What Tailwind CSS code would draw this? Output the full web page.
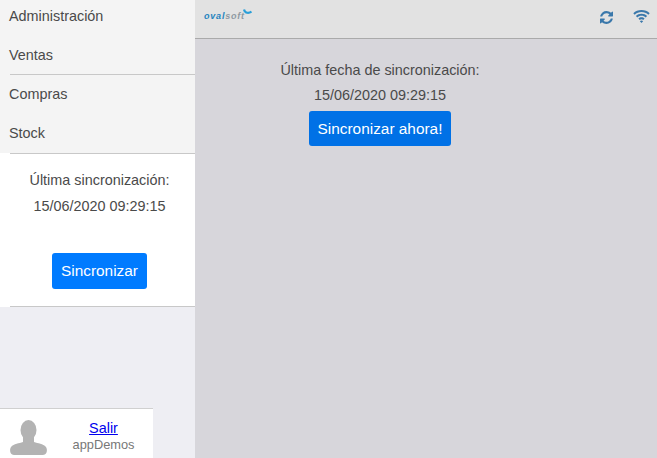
<!DOCTYPE html>
<html lang="en">
<head>
  <meta charset="UTF-8">
  <title>Sincronización</title>
  <script src="https://cdn.jsdelivr.net/npm/@tailwindcss/browser@4"></script>
</head>
<body class="h-[458px] overflow-hidden font-['Liberation_Sans',Arial,sans-serif] text-[14.4px] text-[#4a4a4a]">
  <div class="flex h-full">
    <!-- Sidebar -->
    <aside class="w-[195px] shrink-0 flex flex-col bg-[#eeeef3]">
      <div class="bg-[#f4f4f4]">
        <div class="h-[35px] pl-[9px] leading-[32px]">Administración</div>
        <div class="h-[39px] pl-[9px] leading-[40px]">Ventas</div>
        <div class="h-[40px] pl-[9px] leading-[40px] relative">Compras<span class="absolute left-[10px] right-0 top-0 h-px bg-[#c8c8c8]"></span></div>
        <div class="h-[39px] pl-[9px] leading-[39px]">Stock</div>
      </div>
      <div class="bg-white h-[154px] pl-[10px]">
        <div class="h-full border-y border-[#c8c8c8] flex flex-col items-center pr-[6px]">
          <p class="mt-[16px] leading-[20px]">Última sincronización:</p>
          <p class="mt-[6px] leading-[20px]">15/06/2020 09:29:15</p>
          <button class="mt-[37px] w-[95px] h-[36px] rounded-[3px] bg-[#007bff] text-white text-[15.400px]">Sincronizar</button>
        </div>
      </div>
      <!-- User -->
      <div class="mt-auto w-[153px] h-[50px] bg-white border-t border-[#d0d0d0] flex">
        <svg class="w-[37px] h-[35px] ml-[10px] mt-[11px] shrink-0" viewBox="0 0 37 35" fill="#b3b3b3">
          <ellipse cx="18.500" cy="10" rx="8" ry="10"/>
          <path d="M13 17h11v5c4 1.500 9 1.500 12 5 1.500 2 1.500 8-3 8H4c-4.500 0-4.500-6-3-8 3-3.500 8-3.500 12-5z"/>
        </svg>
        <div class="flex-1 flex flex-col items-center pl-[7px]">
          <a href="#" class="mt-[10px] leading-[18px] text-[#0000ee] underline">Salir</a>
          <span class="leading-[16px] text-[#777] text-[12.800px]">appDemos</span>
        </div>
      </div>
    </aside>

    <!-- Main -->
    <div class="flex-1 flex flex-col bg-[#d7d6db]">
      <header class="h-[39px] shrink-0 bg-[#e2e2e2] border-b border-[#aaa] flex items-center relative">
        <div class="ml-[9px] mb-[6px] flex items-start">
          <span class="text-[9px] leading-[9px] font-bold italic tracking-[0.8px] text-[#2584bf]">oval<span class="text-[#8f9aa3]">soft</span></span>
          <svg class="w-[9px] h-[7px] -mt-[4px] -ml-[2px]" viewBox="0 0 9 7" fill="none" stroke="#2a9fd8" stroke-width="2.200"><path d="M1 1.500c1 4 5 4 7.500 2"/></svg>
        </div>
        <svg class="absolute left-[405px] top-[11px] w-[13px] h-[13px]" viewBox="0 0 1536 1536" fill="#3a78ab">
          <path d="M1511 928q0 5-1 7-64 268-268 434.500T764 1536q-146 0-282.500-55T238 1324l-129 129q-19 19-45 19t-45-19-19-45V960q0-26 19-45t45-19h448q26 0 45 19t19 45-19 45l-137 137q71 66 161 102t187 36q134 0 250-65t186-179q11-17 53-117 8-23 30-23h192q13 0 22.500 9.500t9.500 22.500zm25-800v448q0 26-19 45t-45 19h-448q-26 0-45-19t-19-45 19-45l138-138Q969 256 768 256q-134 0-250 65T332 500q-11 17-53 117-8 23-30 23H50q-13 0-22.500-9.500T18 608v-7q65-268 270-434.500T768 0q146 0 284 55.500T1297 212l130-129q19-19 45-19t45 19 19 45z"/>
        </svg>
        <svg class="absolute left-[438px] top-[10px] w-[17px] h-[13px]" viewBox="0 0 17 13" fill="#3a78ab">
          <path d="M8.500 0C5.300 0 2.400 1.200 0.300 3.200L1.700 4.700C3.500 3 5.900 2 8.500 2s5 1 6.800 2.700l1.400-1.500C14.600 1.200 11.700 0 8.500 0z"/>
          <path d="M8.500 3.700C6.300 3.700 4.300 4.500 2.900 5.900L4.300 7.400C5.400 6.300 6.900 5.700 8.500 5.700s3.100 0.600 4.200 1.700l1.400-1.500C12.700 4.500 10.700 3.700 8.500 3.700z"/>
          <path d="M8.500 7.300C7.300 7.300 6.200 7.800 5.400 8.500L6.800 10C7.200 9.600 7.800 9.300 8.500 9.300s1.300 0.300 1.700 0.700L11.600 8.500C10.800 7.800 9.700 7.300 8.500 7.300z"/>
          <path d="M8.500 13L6.900 11.200C7.300 10.800 7.900 10.600 8.500 10.600s1.200 0.200 1.600 0.600z"/>
        </svg>
      </header>
      <main class="w-[370px] flex flex-col items-center">
        <p class="mt-[21px] leading-[20px]">Última fecha de sincronización:</p>
        <p class="mt-[5px] leading-[20px]">15/06/2020 09:29:15</p>
        <button class="mt-[6px] w-[142px] h-[35px] rounded-[3px] bg-[#0071e6] text-white text-[15.400px]">Sincronizar ahora!</button>
      </main>
    </div>
  </div>
</body>
</html>
